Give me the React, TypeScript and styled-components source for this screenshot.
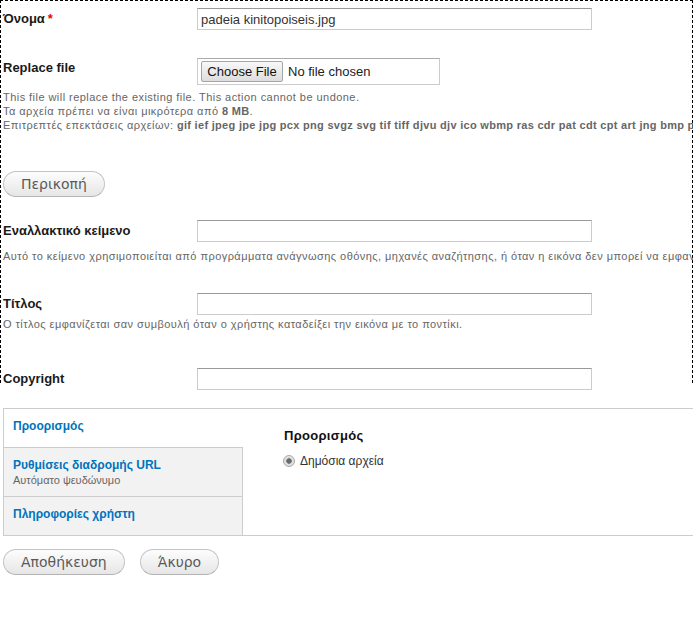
import React from 'react';
import styled, { createGlobalStyle } from 'styled-components';

const GlobalStyle = createGlobalStyle`
  html, body { margin: 0; padding: 0; background: #fff; overflow: hidden; }
  body { font-family: "Liberation Sans", Arial, sans-serif; color: #333; }
`;

const Page = styled.div`
  width: 693px;
`;

const Fieldset = styled.div`
  box-sizing: border-box;
  width: 693px;
  height: 383px;
  border: 1px dashed #000;
  border-bottom: none;
  padding-left: 2px;
`;

const Item = styled.div<{ $mt: number }>`
  margin-top: ${(p) => p.$mt}px;
`;

const Row = styled.div<{ $align?: string }>`
  display: grid;
  grid-template-columns: 194px auto;
  align-items: ${(p) => p.$align || 'center'};
  justify-content: start;
`;

const Label = styled.label<{ $pt?: number }>`
  font: bold 13px/16px "Liberation Sans", Arial, sans-serif;
  color: #1a1a1a;
  padding-top: ${(p) => p.$pt || 0}px;
`;

const Required = styled.span`
  color: #e00;
  margin-left: 3px;
`;

const TextInput = styled.input`
  box-sizing: border-box;
  width: 395px;
  height: 22px;
  margin: 0;
  padding: 0 3px;
  border: 1px solid #ccc;
  border-top-color: #999;
  font: 13px "Liberation Sans", Arial, sans-serif;
  color: #333;
  background: #fff;
  outline: none;
`;

const FileBox = styled.div`
  box-sizing: border-box;
  width: 243px;
  height: 27px;
  border: 1px solid #ccc;
  border-top-color: #aaa;
  padding: 2px 3px;
  display: flex;
  align-items: center;
  gap: 5px;
`;

const FileButton = styled.span`
  box-sizing: border-box;
  width: 82px;
  height: 21px;
  border: 1px solid #a6a6a6;
  border-radius: 2px;
  background: linear-gradient(#f8f8f8, #dddddd);
  font: 13px/19px "Liberation Sans", Arial, sans-serif;
  color: #111;
  text-align: center;
`;

const FileText = styled.span`
  font: 13px "Liberation Sans", Arial, sans-serif;
  color: #222;
`;

const Description = styled.div<{ $mt: number }>`
  margin-top: ${(p) => p.$mt}px;
  font: 11px/14px "Liberation Sans", Arial, sans-serif;
  letter-spacing: 0.45px;
  color: #666;
  white-space: nowrap;
  b { font-weight: bold; letter-spacing: 0.3px; }
`;

const Button = styled.button<{ $mt?: number }>`
  box-sizing: border-box;
  height: 26px;
  margin: ${(p) => p.$mt || 0}px 0 0;
  padding: 0 17px;
  border: 1px solid #c4c4c4;
  border-bottom-color: #b4b4b4;
  border-radius: 13px;
  background: linear-gradient(#fdfdfd, #e6e6e6);
  font: 14px "DejaVu Sans", sans-serif;
  color: #5a5a5a;
  cursor: pointer;
`;

const Tabs = styled.div`
  box-sizing: border-box;
  display: flex;
  width: 720px;
  height: 128px;
  margin: 25px 0 0 3px;
  border: 1px solid #ccc;
`;

const TabList = styled.div`
  display: flex;
  flex-direction: column;
  width: 239px;
`;

const Tab = styled.div<{ $active?: boolean; $h: number; $first?: boolean }>`
  box-sizing: border-box;
  height: ${(p) => p.$h}px;
  padding: 9px 9px 0;
  background: ${(p) => (p.$active ? '#fff' : '#f2f2f2')};
  border-right: 1px solid ${(p) => (p.$active ? 'transparent' : '#ccc')};
  border-top: ${(p) => (p.$first ? 'none' : '1px solid #ccc')};
`;

const TabTitle = styled.div`
  font: bold 12px/16px "Liberation Sans", Arial, sans-serif;
  color: #0074bd;
`;

const TabSummary = styled.div`
  font: 11px/15px "Liberation Sans", Arial, sans-serif;
  color: #666;
`;

const Pane = styled.div`
  flex: 1;
  padding: 19px 0 0 41px;
`;

const PaneHeading = styled.div`
  font: bold 13px/16px "Liberation Sans", Arial, sans-serif;
  color: #111;
  letter-spacing: 0.3px;
`;

const RadioRow = styled.div`
  display: flex;
  align-items: center;
  gap: 5px;
  margin-top: 10px;
  font: 12px/14px "Liberation Sans", Arial, sans-serif;
  color: #333;
`;

const Radio = styled.span`
  box-sizing: border-box;
  width: 12px;
  height: 12px;
  margin-left: -1px;
  border-radius: 50%;
  border: 1px solid #a8a8a8;
  background: radial-gradient(circle, #6a6a6a 0 2.4px, #d9d9d9 3px, #f4f4f4 100%);
`;

const Actions = styled.div`
  display: flex;
  gap: 15px;
  margin: 13px 0 0 3px;
`;

export default function App() {
  return (
    <Page>
      <GlobalStyle />
      <Fieldset>
        <Item $mt={7}>
          <Row>
            <Label>
              Όνομα<Required>*</Required>
            </Label>
            <TextInput defaultValue="padeia kinitopoiseis.jpg" />
          </Row>
        </Item>
        <Item $mt={28}>
          <Row $align="start">
            <Label $pt={2}>Replace file</Label>
            <FileBox>
              <FileButton>Choose File</FileButton>
              <FileText>No file chosen</FileText>
            </FileBox>
          </Row>
          <Description $mt={5}>
            This file will replace the existing file. This action cannot be undone.
            <br />
            Τα αρχεία πρέπει να είναι μικρότερα από <b>8 MB</b>.
            <br />
            Επιτρεπτές επεκτάσεις αρχείων:{' '}
            <b>
              gif ief jpeg jpe jpg pcx png svgz svg tif tiff djvu djv ico wbmp ras cdr pat cdt cpt art jng bmp psd pdf
            </b>
          </Description>
        </Item>
        <Button $mt={39}>Περικοπή</Button>
        <Item $mt={23}>
          <Row>
            <Label>Εναλλακτικό κείμενο</Label>
            <TextInput />
          </Row>
          <Description $mt={7}>
            Αυτό το κείμενο χρησιμοποιείται από προγράμματα ανάγνωσης οθόνης, μηχανές αναζήτησης, ή όταν η εικόνα δεν μπορεί να εμφανιστεί.
          </Description>
        </Item>
        <Item $mt={30}>
          <Row>
            <Label>Τίτλος</Label>
            <TextInput />
          </Row>
          <Description $mt={2}>
            Ο τίτλος εμφανίζεται σαν συμβουλή όταν ο χρήστης καταδείξει την εικόνα με το ποντίκι.
          </Description>
        </Item>
        <Item $mt={37}>
          <Row>
            <Label>Copyright</Label>
            <TextInput />
          </Row>
        </Item>
      </Fieldset>
      <Tabs>
        <TabList>
          <Tab $active $first $h={38}>
            <TabTitle>Προορισμός</TabTitle>
          </Tab>
          <Tab $h={49}>
            <TabTitle>Ρυθμίσεις διαδρομής URL</TabTitle>
            <TabSummary>Αυτόματο ψευδώνυμο</TabSummary>
          </Tab>
          <Tab $h={39}>
            <TabTitle>Πληροφορίες χρήστη</TabTitle>
          </Tab>
        </TabList>
        <Pane>
          <PaneHeading>Προορισμός</PaneHeading>
          <RadioRow>
            <Radio />
            Δημόσια αρχεία
          </RadioRow>
        </Pane>
      </Tabs>
      <Actions>
        <Button>Αποθήκευση</Button>
        <Button>Άκυρο</Button>
      </Actions>
    </Page>
  );
}
